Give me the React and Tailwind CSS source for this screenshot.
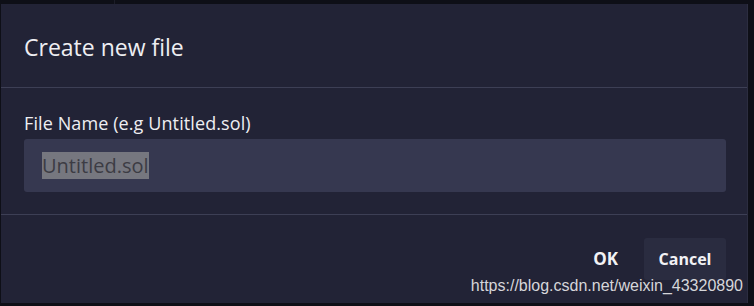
export default function App() {
  return (
    <div className="relative w-[754px] h-[306px] bg-[#0e0f17] overflow-hidden" style={{ fontFamily: '"Open Sans", Lato, sans-serif' }}>
      <div className="absolute left-[114px] top-0 h-[4px] w-px bg-[#1c1d28]" />
      <div className="ml-px mt-[4px] w-[747px] h-[299px] bg-[#222336] flex flex-col border-r border-[#2c2d40]">
        <div className="h-[83px] flex items-center px-[23px] pt-[4px]">
          <h1 className="text-[23px] text-[#eeeef2] leading-none">Create new file</h1>
        </div>
        <div className="h-px bg-[#3d3f55]" />
        <div className="px-[23px] pt-[26px] h-[126px]">
          <div className="text-[18px] text-[#eeeef2] leading-none mb-[7px] tracking-[0.1px]">File Name (e.g Untitled.sol)</div>
          <div className="h-[53px] w-[702px] rounded-[3px] bg-[#363850] flex items-center px-[18px]">
            <span className="text-[20px] text-[#3c3c44] bg-[#76777f] leading-[27px]">Untitled.sol</span>
          </div>
        </div>
        <div className="h-px bg-[#3d3f55]" />
        <div className="flex justify-end items-start pt-[23px] pr-[21px] gap-[14px]">
          <button className="h-[42px] px-[12px] text-[17px] font-bold text-[#f2f2f5]">OK</button>
          <button className="h-[42px] w-[82px] rounded-[3px] bg-[#2a2c40] text-[16px] font-bold text-[#f2f2f5]">Cancel</button>
        </div>
      </div>
      <div className="absolute right-[11px] top-[278px] text-[16px] text-[#d6d6da] leading-none" style={{ fontFamily: '"Liberation Sans", Arial, sans-serif' }}>https://blog.csdn.net/weixin_43320890</div>
    </div>
  );
}
